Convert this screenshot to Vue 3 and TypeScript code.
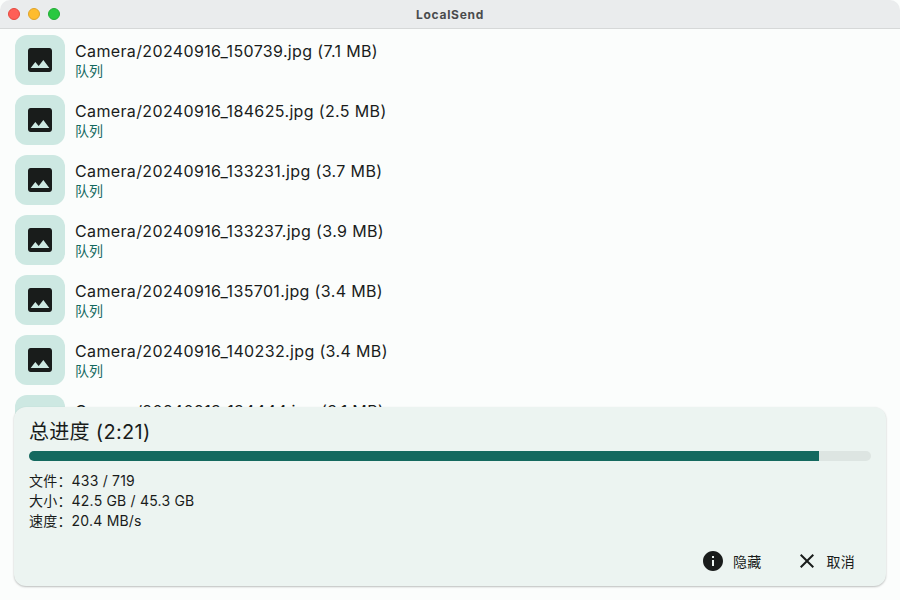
<template>
  <div class="window">
    <header class="titlebar">
      <div class="lights">
        <span class="light red"></span>
        <span class="light yellow"></span>
        <span class="light green"></span>
      </div>
      <div class="app-title">LocalSend</div>
    </header>

    <main class="content">
      <div class="file-list">
        <div v-for="f in files" :key="f.name" class="file-row">
          <div class="thumb">
            <svg class="thumb-icon" width="32" height="32" viewBox="0 0 24 24">
              <path d="M21 19V5c0-1.100-.9-2-2-2H5c-1.100 0-2 .9-2 2v14c0 1.100.9 2 2 2h14c1.100 0 2-.9 2-2zM8.500 13.500l2.500 3.010L14.500 12l4.500 6H5l3.500-4.500z" />
            </svg>
          </div>
          <div class="file-info">
            <div class="file-name">{{ f.name }} ({{ f.size }})</div>
            <div class="file-status">队列</div>
          </div>
        </div>
      </div>

      <section class="progress-card">
        <div class="progress-title">总进度 (2:21)</div>
        <div class="track">
          <div class="fill" :style="{ width: progress + '%' }"></div>
        </div>
        <div class="stats">
          <div v-for="s in stats" :key="s.label" class="stat">
            <span>{{ s.label }}：</span>
            <span>{{ s.value }}</span>
          </div>
        </div>
        <div class="actions">
          <button class="action">
            <svg width="24" height="24" viewBox="0 0 24 24">
              <path d="M12 2C6.480 2 2 6.480 2 12s4.480 10 10 10 10-4.480 10-10S17.520 2 12 2zm1 15h-2v-6h2v6zm0-8h-2V7h2v2z" />
            </svg>
            <span>隐藏</span>
          </button>
          <button class="action">
            <svg width="24" height="24" viewBox="0 0 24 24">
              <path d="M19 6.410L17.590 5 12 10.590 6.410 5 5 6.410 10.590 12 5 17.590 6.410 19 12 13.410 17.590 19 19 17.590 13.410 12z" />
            </svg>
            <span>取消</span>
          </button>
        </div>
      </section>
    </main>
  </div>
</template>

<script setup lang="ts">
interface QueuedFile {
  name: string;
  size: string;
}

const files: QueuedFile[] = [
  { name: "Camera/20240916_150739.jpg", size: "7.1 MB" },
  { name: "Camera/20240916_184625.jpg", size: "2.5 MB" },
  { name: "Camera/20240916_133231.jpg", size: "3.7 MB" },
  { name: "Camera/20240916_133237.jpg", size: "3.9 MB" },
  { name: "Camera/20240916_135701.jpg", size: "3.4 MB" },
  { name: "Camera/20240916_140232.jpg", size: "3.4 MB" },
  { name: "Camera/20240913_134444.jpg", size: "3.1 MB" },
];

const stats = [
  { label: "文件", value: "433 / 719" },
  { label: "大小", value: "42.5 GB / 45.3 GB" },
  { label: "速度", value: "20.4 MB/s" },
];

const progress = 93.8;
</script>

<style>
html,
body {
  margin: 0;
  background: #fff;
}
</style>

<style scoped>
.window {
  width: 900px;
  height: 600px;
  display: flex;
  flex-direction: column;
  overflow: hidden;
  background: #fbfdfc;
  font-family: Inter, "Noto Sans CJK SC", sans-serif;
  color: #191c1b;
}
.titlebar {
  position: relative;
  height: 28px;
  flex: none;
  display: flex;
  align-items: center;
  justify-content: center;
  background: #eaeced;
  border-bottom: 1px solid #d6d8d8;
  border-radius: 10px 10px 0 0;
}
.lights {
  position: absolute;
  left: 8px;
  top: 8px;
  display: flex;
  gap: 8px;
}
.light {
  width: 12px;
  height: 12px;
  box-sizing: border-box;
  border-radius: 50%;
  border: 1px solid;
}
.red { background: #ff5f57; border-color: #e5493f; }
.yellow { background: #febc2e; border-color: #e0a42a; }
.green { background: #28c840; border-color: #22ad35; }
.app-title {
  font-size: 12px;
  font-weight: 700;
  letter-spacing: 0.7px;
  color: #4a4c4d;
}
.content {
  position: relative;
  flex: 1;
  overflow: hidden;
}
.file-list {
  display: flex;
  flex-direction: column;
  gap: 10px;
  padding: 6px 15px 0;
}
.file-row {
  display: flex;
  align-items: center;
  gap: 10px;
}
.thumb {
  width: 50px;
  height: 50px;
  flex: none;
  display: flex;
  align-items: center;
  justify-content: center;
  border-radius: 12px;
  background: #cde8e2;
}
.thumb-icon {
  fill: #191c1b;
}
.file-info {
  padding-top: 2px;
}
.file-name {
  font-size: 16px;
  line-height: 20px;
  letter-spacing: 0.36px;
}
.file-status {
  font-size: 14px;
  line-height: 20px;
  color: #14695f;
}
.progress-card {
  position: absolute;
  left: 14px;
  right: 14px;
  bottom: 14px;
  height: 179px;
  box-sizing: border-box;
  padding: 12px 15px 0;
  display: flex;
  flex-direction: column;
  border-radius: 12px;
  background: #ecf4f1;
  box-shadow: 0 1px 2px rgba(0, 0, 0, 0.25);
}
.progress-title {
  font-size: 20px;
  line-height: 26px;
  letter-spacing: 0.3px;
}
.track {
  height: 10px;
  margin-top: 6px;
  border-radius: 5px;
  overflow: hidden;
  background: #dde5e2;
}
.fill {
  height: 100%;
  background: #14695f;
}
.stats {
  margin-top: 10px;
  font-size: 14px;
  line-height: 20px;
  letter-spacing: 0.2px;
}
.actions {
  margin-top: auto;
  display: flex;
  justify-content: flex-end;
  gap: 1px;
  padding-bottom: 7px;
}
.action {
  display: flex;
  align-items: center;
  gap: 8px;
  height: 36px;
  padding: 0 16px;
  border: none;
  background: none;
  font: inherit;
  font-size: 14px;
  letter-spacing: 0.25px;
  color: #191c1b;
}
.action svg {
  fill: #191c1b;
}
</style>
